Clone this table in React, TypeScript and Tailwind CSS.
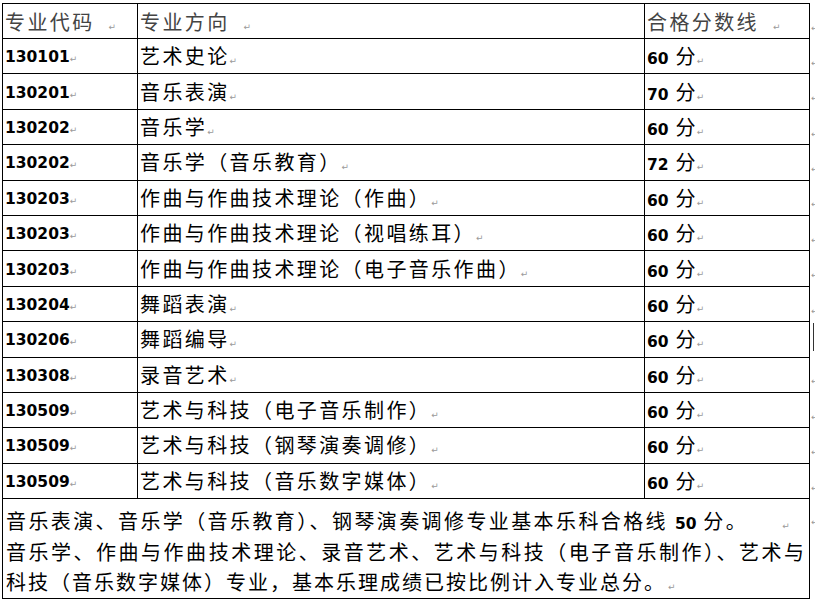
import React from 'react';

const rows = [
  ['130101', '艺术史论', '60'],
  ['130201', '音乐表演', '70'],
  ['130202', '音乐学', '60'],
  ['130202', '音乐学（音乐教育）', '72'],
  ['130203', '作曲与作曲技术理论（作曲）', '60'],
  ['130203', '作曲与作曲技术理论（视唱练耳）', '60'],
  ['130203', '作曲与作曲技术理论（电子音乐作曲）', '60'],
  ['130204', '舞蹈表演', '60'],
  ['130206', '舞蹈编导', '60'],
  ['130308', '录音艺术', '60'],
  ['130509', '艺术与科技（电子音乐制作）', '60'],
  ['130509', '艺术与科技（钢琴演奏调修）', '60'],
  ['130509', '艺术与科技（音乐数字媒体）', '60'],
];

// Word paragraph mark
function Mark({ className = '' }: { className?: string }) {
  return (
    <span className={`font-['DejaVu_Sans',sans-serif] text-[9px] leading-none tracking-normal text-[#9a9a9a] ${className}`}>
      ↵
    </span>
  );
}

function RowEnd({ caret = false }: { caret?: boolean }) {
  return (
    <td className="w-[6px] p-0 align-bottom">
      <div className="w-[6px] overflow-hidden pb-[6px] pl-[1px] leading-none">
        {caret ? <div className="ml-[2px] h-[28px] w-px bg-[#333]" /> : <Mark />}
      </div>
    </td>
  );
}

const cjk = "font-['Noto_Sans_CJK_SC',sans-serif] text-[20px] tracking-[2.4px]";
const num = "font-['DejaVu_Sans',sans-serif] text-[15.5px] font-bold leading-none tracking-normal";

export default function App() {
  return (
    <div className="h-[603px] w-[815px] overflow-hidden bg-white pl-[2px] pt-[3px] text-black">
      <table className="w-[813px] table-fixed border-collapse">
        <colgroup>
          <col className="w-[135px]" />
          <col className="w-[507px]" />
          <col className="w-[165px]" />
          <col className="w-[6px]" />
        </colgroup>
        <tbody>
          <tr className="h-[35px]">
            <td className={`border border-black px-[2px] pt-[2px] align-middle text-[#444] ${cjk}`}>
              专业代码<Mark className="ml-[14px]" />
            </td>
            <td className={`border border-black px-[2px] pt-[2px] align-middle text-[#444] ${cjk}`}>
              专业方向<Mark className="ml-[14px]" />
            </td>
            <td className={`border border-black px-[2px] pt-[2px] align-middle text-[#444] ${cjk}`}>
              合格分数线<Mark className="ml-[14px]" />
            </td>
            <RowEnd />
          </tr>
          {rows.map(([code, name, score], i) => (
            <tr key={i} className="h-[35.4px]">
              <td className="border border-black px-[2px] align-middle">
                <span className={num}>{code}</span>
                <Mark />
              </td>
              <td className={`border border-black px-[2px] align-middle ${cjk}`}>
                {name}
                <Mark />
              </td>
              <td className={`border border-black px-[2px] align-middle ${cjk}`}>
                <span className={num}>{score}</span> 分<Mark className="-ml-[1px]" />
              </td>
              <RowEnd caret={code === '130206'} />
            </tr>
          ))}
          <tr>
            <td colSpan={3} className={`h-[100px] border border-black px-[3px] pt-[7px] pb-0 align-top leading-[30.5px] ${cjk}`}>
              <div className="whitespace-nowrap">
                音乐表演、音乐学（音乐教育）、钢琴演奏调修专业基本乐科合格线 <span className={num}>50</span> 分。
                <Mark className="ml-[34px]" />
              </div>
              <div className="text-justify tracking-[2px]">
                音乐学、作曲与作曲技术理论、录音艺术、艺术与科技（电子音乐制作）、艺术与科技（音乐数字媒体）专业，基本乐理成绩已按比例计入专业总分。
                <Mark className="ml-[2px]" />
              </div>
            </td>
            <td className="w-[6px] p-0 align-top">
              <div className="w-[6px] overflow-hidden pl-[1px] pt-[12px] leading-none">
                <Mark />
              </div>
            </td>
          </tr>
        </tbody>
      </table>
    </div>
  );
}
